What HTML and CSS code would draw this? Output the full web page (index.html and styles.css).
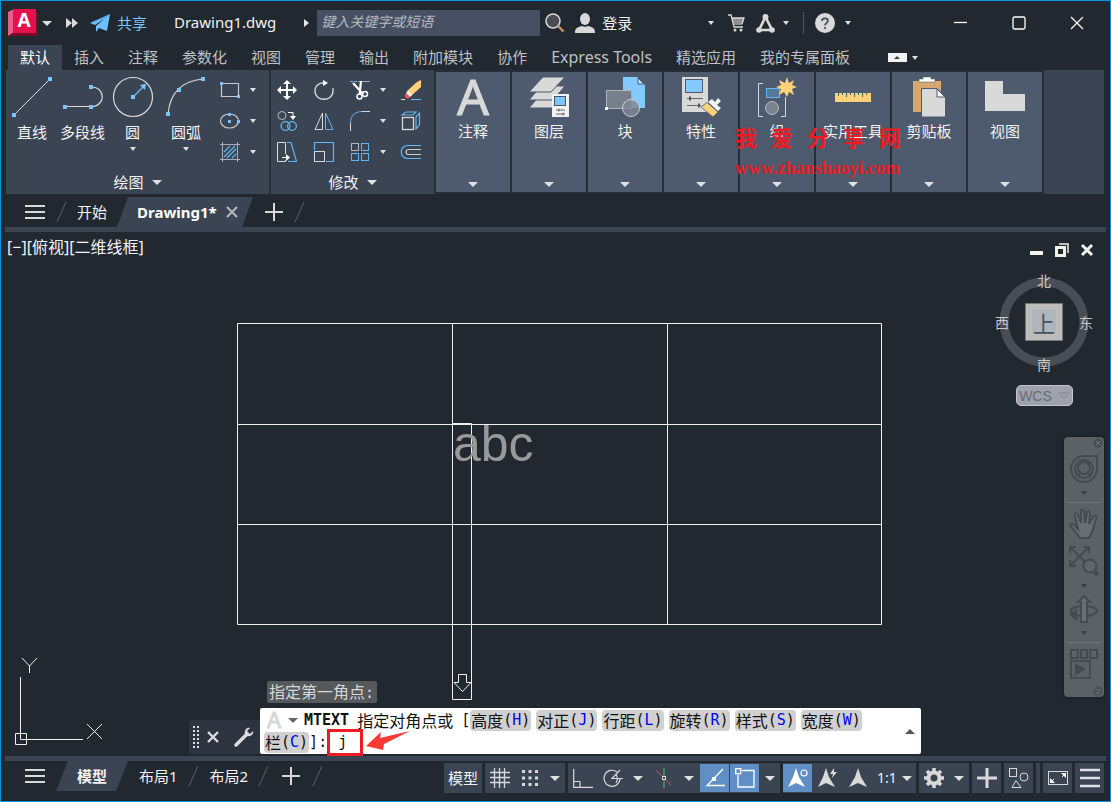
FILE: index.html
```html
<!DOCTYPE html>
<html lang="zh-CN">
<head>
  <meta charset="UTF-8">
  <meta name="viewport" content="width=device-width, initial-scale=1.0">
  <title>Drawing1.dwg</title>
  <link rel="stylesheet" href="styles.css">
</head>
<body>
  <header class="titlebar">
    <button class="app-button" aria-label="A">
      <svg width="30" height="28" viewBox="0 0 30 28">
        <path d="M0 3L6 0V24L0 27Z" fill="#ee5c88"/>
        <path d="M6 0H26L30 5V27H0L6 23Z" fill="#7a0a28"/>
        <rect x="5" y="0" width="23" height="24" fill="#e6104f"/>
        <text x="16" y="18" text-anchor="middle" class="logo-letter">A</text>
      </svg>
      <i class="caret wide"></i>
    </button>
    <button class="more" aria-label="更多">
      <svg width="12" height="10" viewBox="0 0 12 10" fill="#d9d9d9"><path d="M0 0L6 5L0 10ZM6 0L12 5L6 10Z"/></svg>
    </button>
    <button class="share">
      <svg width="20" height="18" viewBox="0 0 20 18"><path d="M20 0L0 9L5 11L15 4L6 12V18L9 14L17 17Z" fill="#6fc0ff"/><path d="M0 9L20 0L7 12L17 3Z" fill="#4e9ddd"/></svg>
      共享
    </button>
    <span class="doc-title">Drawing1.dwg</span>
    <form class="search">
      <svg width="5" height="8" viewBox="0 0 5 8"><path d="M0 0L5 4L0 8Z" fill="#e6e6e6"/></svg>
      <input type="text" placeholder="键入关键字或短语" aria-label="搜索">
      <svg width="20" height="20" viewBox="0 0 20 20" fill="none"><circle cx="8" cy="8" r="7" fill="#484d56" stroke="#d6d6d6" stroke-width="1.6"/><path d="M13 13L18.500 18.500" stroke="#c89a63" stroke-width="2.400"/></svg>
    </form>
    <button class="login">
      <svg width="20" height="20" viewBox="0 0 20 20" fill="#d9d9d9"><ellipse cx="10" cy="6" rx="5" ry="6"/><path d="M0 20C0 15 2 14.500 7 13C9 14 11 14 13 13C18 14.500 20 15 20 20Z"/></svg>
      登录
    </button>
    <div class="title-tools">
      <i class="caret"></i>
      <button aria-label="商店"><svg width="17" height="18" viewBox="0 0 17 18"><path d="M4 4H16L14 11H6Z" fill="#8d9096"/><path d="M0 1H3L6 13H15M4 4H16L14 10" fill="none" stroke="#d9d9d9" stroke-width="1.300"/><circle cx="7" cy="16" r="1.500" fill="#d9d9d9"/><circle cx="13" cy="16" r="1.500" fill="#d9d9d9"/></svg></button>
      <button aria-label="应用"><svg width="19" height="19" viewBox="0 0 19 19" fill="none" stroke="#d9d9d9"><path d="M9.500 3L3 16H16Z" stroke-width="2.600"/><g fill="#d9d9d9" stroke="none"><circle cx="9.500" cy="3" r="3"/><circle cx="3" cy="16" r="2.800"/><circle cx="16" cy="16" r="2.800"/></g></svg><i class="caret"></i></button>
      <button class="help" aria-label="帮助"><svg width="20" height="20" viewBox="0 0 20 20"><circle cx="10" cy="10" r="10" fill="#d9d9d9"/><path d="M7 8C7 4.500 13 4.500 13 8C13 10 10 10 10 12.500M10 14V16" fill="none" stroke="#444b57" stroke-width="1.600"/></svg><i class="caret"></i></button>
    </div>
    <div class="window-tools">
      <button aria-label="最小化"><svg width="14" height="14" viewBox="0 0 14 14"><path d="M0 6.500H13" stroke="#fff" stroke-width="1.300"/></svg></button>
      <button aria-label="最大化"><svg width="14" height="14" viewBox="0 0 14 14"><rect x="1" y="1" width="12" height="12" rx="1.500" fill="none" stroke="#fff" stroke-width="1.300"/></svg></button>
      <button aria-label="关闭"><svg width="14" height="14" viewBox="0 0 14 14"><path d="M1 1L13 13M13 1L1 13" stroke="#fff" stroke-width="1.300"/></svg></button>
    </div>
  </header>

  <nav class="ribbon-tabs">
    <a href="#" class="active">默认</a>
    <a href="#">插入</a>
    <a href="#">注释</a>
    <a href="#">参数化</a>
    <a href="#">视图</a>
    <a href="#">管理</a>
    <a href="#">输出</a>
    <a href="#">附加模块</a>
    <a href="#">协作</a>
    <a href="#" class="latin">Express Tools</a>
    <a href="#">精选应用</a>
    <a href="#">我的专属面板</a>
    <button class="collapse" aria-label="最小化功能区"><svg width="19" height="9" viewBox="0 0 19 9"><rect width="19" height="9" fill="#f2f2f2"/><path d="M6 6H12L9 3Z" fill="#444"/></svg><i class="caret"></i></button>
  </nav>

  <section class="ribbon">
    <div class="panel draw">
      <div class="tools">
        <button class="big">
          <svg width="40" height="40" viewBox="0 0 40 40"><path d="M2 38L38 2" stroke="#d9d9d9"/><path d="M0 36h4v4h-4zM36 0h4v4h-4z" fill="#7cc4ff"/></svg>
          直线
        </button>
        <button class="big">
          <svg width="40" height="40" viewBox="0 0 40 40"><path d="M2 29.500H28C43 29.500 43 10 28 10" fill="none" stroke="#d9d9d9" stroke-width="1.200"/><path d="M0 28h4v4h-4zM26 28h4v4h-4zM26 8h4v4h-4z" fill="#7cc4ff"/></svg>
          多段线
        </button>
        <button class="big">
          <svg width="40" height="40" viewBox="0 0 40 40"><circle cx="20" cy="20" r="19.500" fill="none" stroke="#d9d9d9" stroke-width="1.200"/><path d="M20 20L32 8" stroke="#64b5f3" stroke-width="1.400"/><path d="M18 18h4v4h-4zM27 8L33 7L32 13Z" fill="#7cc4ff"/></svg>
          圆
          <i class="caret"></i>
        </button>
        <button class="big">
          <svg width="40" height="40" viewBox="0 0 40 40"><path d="M2 37C4 16 16 4 37 2" fill="none" stroke="#d9d9d9" stroke-width="1.200"/><path d="M0 35h4v4h-4zM11 11h4v4h-4zM35 0h4v4h-4z" fill="#7cc4ff"/></svg>
          圆弧
          <i class="caret"></i>
        </button>
        <div class="small-tools">
          <button aria-label="矩形"><svg width="20" height="20" viewBox="0 0 20 20"><path d="M1.500 3.500H18.500V16.500H1.500Z" fill="none" stroke="#c7cad0" stroke-width="1.200"/><path d="M0 2h3v3h-3zM17 15h3v3h-3z" fill="#7cc4ff"/></svg><i class="caret"></i></button>
          <button aria-label="椭圆"><svg width="20" height="20" viewBox="0 0 20 20"><ellipse cx="9.500" cy="10" rx="9" ry="7" fill="none" stroke="#c7cad0" stroke-width="1.200"/><path d="M8 2h3v3h-3zM8 9h3v3h-3zM17 9h3v3h-3z" fill="#7cc4ff"/></svg><i class="caret"></i></button>
          <button aria-label="图案填充"><svg width="20" height="20" viewBox="0 0 20 20"><path d="M2.500 0V20M17.500 0V20M0 2.500H20M0 17.500H20" stroke="#a9adb5"/><path d="M4 10L10 4M4 15L15 4M7 16L16 7M12 16L16 12" stroke="#64b5f3" stroke-width="1.300"/></svg><i class="caret"></i></button>
        </div>
      </div>
      <button class="panel-name">绘图<i class="caret wide"></i></button>
    </div>

    <div class="panel modify">
      <div class="modify-grid">
        <button aria-label="移动"><svg width="20" height="20" viewBox="0 0 20 20"><path d="M10 0L14 4H11V9H16V6L20 10L16 14V11H11V16H14L10 20L6 16H9V11H4V14L0 10L4 6V9H9V4H6Z" fill="#fff"/></svg></button>
        <button aria-label="旋转"><svg width="20" height="20" viewBox="0 0 20 20"><path d="M11 3C5 2 1 6 1 11C1 22 19 22 19 11V8" fill="none" stroke="#d9d9d9" stroke-width="1.300"/><path d="M9 0L14 3L9 6Z" fill="#fff"/></svg></button>
        <button aria-label="修剪"><svg width="20" height="20" viewBox="0 0 20 20" fill="none"><path d="M0 1.500H10" stroke="#64b5f3" stroke-dasharray="3 1"/><path d="M12 1.500H20" stroke="#aaa"/><path d="M3 3L13 14M11 1L9.500 15" stroke="#fff" stroke-width="2.200"/><circle cx="9.500" cy="16.500" r="2.500" stroke="#fff" stroke-width="1.500"/><circle cx="15" cy="14" r="2.500" stroke="#fff" stroke-width="1.500"/></svg><i class="caret"></i></button>
        <button aria-label="删除"><svg width="20" height="20" viewBox="0 0 20 20"><path d="M0 19.500H4" stroke="#ddd"/><path d="M10 19.500H20" stroke="#64b5f3"/><path d="M20 0V7L10 16L6 11L16 2Z" fill="#ffd27a"/><path d="M7 11L11 15L9 17L5 13Z" fill="#fff"/><path d="M5 13L9 17C7 20 3 18 4 15Z" fill="#ff5656"/></svg></button>
        <button aria-label="复制"><svg width="20" height="20" viewBox="0 0 20 20" fill="none"><circle cx="5" cy="4.500" r="4" stroke="#b8bcc3"/><path d="M11 1.500H16V6" stroke="#fff"/><path d="M13 5H19L16 9Z" fill="#fff"/><circle cx="8.500" cy="15" r="4.400" stroke="#64b5f3" stroke-width="1.300"/><circle cx="15" cy="15" r="4.400" stroke="#64b5f3" stroke-width="1.300"/></svg></button>
        <button aria-label="镜像"><svg width="20" height="20" viewBox="0 0 20 20" fill="none"><path d="M8.500 2V18.500H1Z" stroke="#d9d9d9"/><path d="M11.500 2V18.500H19Z" stroke="#64b5f3"/></svg></button>
        <button aria-label="圆角"><svg width="20" height="20" viewBox="0 0 20 20" fill="none"><path d="M.5 20V12M12 .5H20" stroke="#d9d9d9"/><path d="M.5 12C.5 5 5 .5 12 .5" stroke="#64b5f3"/></svg><i class="caret"></i></button>
        <button aria-label="分解"><svg width="20" height="20" viewBox="0 0 20 20" fill="none"><rect x="1.500" y="6.500" width="11" height="12" stroke="#d9d9d9" stroke-width="1.300"/><path d="M1 4L5 1H15L12 4ZM15 6L18.500 2V14L15 18Z" stroke="#64b5f3" stroke-width="1.200"/></svg></button>
        <button aria-label="拉伸"><svg width="20" height="20" viewBox="0 0 20 20" fill="none"><path d="M8.500 12V.5H.5V19.500H8.500V18" stroke="#d9d9d9"/><path d="M10 .5H14L19.500 19.500H11" stroke="#64b5f3" stroke-width="1.200"/><path d="M5 15.500H11" stroke="#fff"/><path d="M9 12L13 15.500L9 19Z" fill="#fff"/></svg></button>
        <button aria-label="缩放"><svg width="20" height="20" viewBox="0 0 20 20" fill="none"><path d="M.5 8V.5H19.500V19.500H12" stroke="#64b5f3" stroke-width="1.200"/><rect x=".5" y="9.500" width="10" height="10" stroke="#d9d9d9"/></svg></button>
        <button aria-label="阵列"><svg width="20" height="20" viewBox="0 0 20 20" fill="none" stroke="#64b5f3"><rect x="1.500" y="1.500" width="7" height="7" stroke="#b8b8b8"/><rect x="11.500" y="1.500" width="7" height="7"/><rect x="1.500" y="11.500" width="7" height="7"/><rect x="11.500" y="11.500" width="7" height="7"/></svg><i class="caret"></i></button>
        <button aria-label="偏移"><svg width="20" height="20" viewBox="0 0 20 20" fill="none" stroke-width="1.200"><path d="M20 3.500H7C-2 3.500-2 16.500 7 16.500H20" stroke="#64b5f3"/><path d="M20 7.500H8C4 7.500 4 12.500 8 12.500H20" stroke="#c5c8cd"/></svg></button>
      </div>
      <button class="panel-name">修改<i class="caret wide"></i></button>
    </div>

    <div class="groups">
      <button class="group">
        <svg width="40" height="40" viewBox="0 0 40 40"><text x="20" y="38" text-anchor="middle" class="icon-letter">A</text></svg>
        注释
        <i class="caret wide"></i>
      </button>
      <button class="group">
        <svg width="40" height="40" viewBox="0 0 40 40"><g fill="#d9d9d9" stroke="#4e5a6d" stroke-width="1"><path d="M0 31L12 17H36L24 31Z"/><path d="M0 23L12 9H36L24 23Z"/><path d="M0 15L14 0H36L22 15Z"/></g><rect x="23" y="17" width="17" height="23" fill="#f2f2f2"/><rect x="25.500" y="19.500" width="11" height="9" fill="#7cc4ff" stroke="#4b5565"/><path d="M27 33H36M27 37H36M30 31.500V34.500M34 35.500V38.500" stroke="#666"/></svg>
        图层
        <i class="caret wide"></i>
      </button>
      <button class="group">
        <svg width="40" height="40" viewBox="0 0 40 40"><path d="M18 0H32L40 8V31H18Z" fill="#84c9ff"/><path d="M33 1L39 7H33Z" fill="#c7e6ff" stroke="#4a5a70" stroke-width="1"/><rect x="1.500" y="13.500" width="25" height="18" fill="#777f8d" stroke="#aeb2b9"/><circle cx="26" cy="31" r="8.500" fill="#808897" fill-opacity=".8" stroke="#ccc"/><rect x="0" y="30" width="3" height="3" fill="#fff"/></svg>
        块
        <i class="caret wide"></i>
      </button>
      <button class="group">
        <svg width="40" height="40" viewBox="0 0 40 40"><rect x="1" width="26" height="35" fill="#d9d9d9"/><rect x="4.500" y="2.500" width="17" height="13" fill="#84c9ff" stroke="#4e5a6d"/><path d="M6 21.500H22M6 28.500H20" stroke="#666"/><path d="M8 19.500h2v4h-2zM17 26.500h2v4h-2z" fill="#555"/><path d="M20 30L26 25.500L37 35L32 40Z" fill="#ffd27a" stroke="#4e5a6d" stroke-width=".8"/><path d="M27 25L31 22L34 25L37 21L40 24L36 28L40 31L37 34Z" fill="#f3f3f3"/></svg>
        特性
        <i class="caret wide"></i>
      </button>
      <button class="group">
        <svg width="40" height="40" viewBox="0 0 40 40"><path d="M6 6.500H1.500V39.500H6M24 39.500H28.500V20" fill="none" stroke="#d9d9d9"/><rect x="9.500" y="11.500" width="13" height="9" fill="#55789b" stroke="#64b5f3"/><circle cx="15" cy="31" r="6.500" fill="#7a8290" stroke="#b7bbc1"/><path d="M30 0L32 6L37 3L35 8L40 10L35 12L37 18L32 15L30 20L27 15L22 18L24 12L19 10L24 8L22 3L28 6Z" fill="#ffd27a"/></svg>
        组
        <i class="caret wide"></i>
      </button>
      <button class="group">
        <svg width="40" height="40" viewBox="0 0 40 40"><rect x="2" y="16" width="36" height="9" fill="#ffd27a"/><path d="M5.500 16V19M9.500 16V18M13.500 16V20M17.500 16V18M21.500 16V20M25.500 16V18M29.500 16V20M33.500 16V18" stroke="#4e5a6d"/></svg>
        实用工具
        <i class="caret wide"></i>
      </button>
      <button class="group">
        <svg width="40" height="40" viewBox="0 0 40 40"><rect x="4" y="4" width="28" height="31" fill="#d5a870"/><path d="M10 5V2H14V0H22V2H26V5Z" fill="#fff" stroke="#4e5a6d" stroke-width=".5"/><path d="M12.500 11.500H28L36.500 20V40H12.500Z" fill="#d9d9d9" stroke="#4e5a6d"/><path d="M28 12V20H36Z" fill="#f5f5f5" stroke="#4e5a6d"/></svg>
        剪贴板
        <i class="caret wide"></i>
      </button>
      <button class="group">
        <svg width="40" height="40" viewBox="0 0 40 40"><path d="M0 4H18V17H40V34H0Z" fill="#d9d9d9"/></svg>
        视图
        <i class="caret wide"></i>
      </button>
      <div class="watermark">
        <div class="watermark-name"><span>我</span><span>爱</span><span>分</span><span>享</span><span>网</span></div>
        <div class="watermark-url">www.zhanshaoyi.com</div>
      </div>
    </div>
  </section>

  <nav class="file-tabs">
    <button class="menu" aria-label="菜单"><svg width="20" height="16" viewBox="0 0 20 16"><path d="M0 2H20M0 8H20M0 14H20" stroke="#d9d9d9" stroke-width="2"/></svg></button>
    <svg class="slash" width="10" height="20" viewBox="0 0 10 20"><path d="M0 20L9 0" stroke="#566070"/></svg>
    <a href="#">开始</a>
    <a href="#" class="current">Drawing1*
      <svg width="10" height="10" viewBox="0 0 10 10"><path d="M0 0L10 10M10 0L0 10" stroke="#b5b8be" stroke-width="2"/></svg>
    </a>
    <button class="add" aria-label="新图形"><svg width="18" height="18" viewBox="0 0 18 18"><path d="M9 0V18M0 9H18" stroke="#d9d9d9" stroke-width="2"/></svg></button>
    <svg class="slash" width="10" height="20" viewBox="0 0 10 20"><path d="M0 20L9 0" stroke="#566070"/></svg>
  </nav>

  <main class="canvas">
    <div class="view-label">[−][俯视][二维线框]</div>

    <svg class="drawing" width="648" height="380" viewBox="0 0 648 380" fill="none" stroke="#f0f0f0">
      <path d="M2.500 .5H646.500V301.500H2.500ZM217.500 .5V301.500M432.500 .5V301.500M2.500 101.500H646.500M2.500 201.500H646.500"/>
      <path d="M217.500 100.500H236.500V376.500H217.500Z"/>
      <path d="M223.500 351.500H231.500V359.500H236L227.500 368.500L219 359.500H223.500Z"/>
      <text x="218" y="138" class="sample">abc</text>
    </svg>

    <svg class="ucs" width="90" height="90" viewBox="0 0 90 90" fill="none" stroke="#f0f0f0">
      <path d="M.5 76.500H11.500V87.500H.5ZM5.500 20V82.500H68M7 1L14.500 9L22 1M14.500 9V16M72 67L87 82M87 67L72 82"/>
    </svg>

    <div class="view-tools">
      <button aria-label="最小化"><svg width="14" height="14" viewBox="0 0 14 14"><rect y="8" width="13" height="4" fill="#f2f2ec"/></svg></button>
      <button aria-label="还原"><svg width="14" height="14" viewBox="0 0 14 14" fill="none" stroke="#f2f2ec"><path d="M4 1H13V10" stroke-width="1.500"/><rect x="1.500" y="4.500" width="8" height="8" stroke-width="3"/></svg></button>
      <button aria-label="关闭"><svg width="14" height="14" viewBox="0 0 14 14"><path d="M2 2L12 12M12 2L2 12" stroke="#f2f2ec" stroke-width="3"/></svg></button>
    </div>

    <div class="compass">
      <svg width="90" height="90" viewBox="0 0 90 90"><circle cx="45" cy="45" r="40" fill="none" stroke="#494d55" stroke-width="9"/></svg>
      <span class="north">北</span>
      <span class="west">西</span>
      <span class="east">东</span>
      <span class="south">南</span>
      <button class="cube">上</button>
    </div>
    <button class="wcs">WCS <svg width="12" height="7" viewBox="0 0 12 7"><path d="M1 1H11L6 6Z" fill="none" stroke="#888b98"/></svg></button>

    <div class="navbar">
      <svg class="dot" width="10" height="10" viewBox="0 0 10 10"><circle cx="5" cy="5" r="4.500" fill="#484d52"/><path d="M3 3L7 7M7 3L3 7" stroke="#71777b"/></svg>
      <button aria-label="控制盘"><svg width="28" height="28" viewBox="0 0 28 28"><path d="M14 1H27V14A13 13 0 1 1 14 1Z"/><circle cx="14" cy="14" r="9"/><circle cx="14" cy="13" r="6"/><path d="M10 18L7 21M18 18L21 21"/></svg><i class="caret"></i></button>
      <hr>
      <button aria-label="平移"><svg width="30" height="30" viewBox="0 0 30 30"><path d="M11 29C8 25 6 22 2 18C0 15 3 14 5 16L9 20L6 7C5 4 8 3 9 6L12 14V3C12 0 15 0 15 3L16 14L18 4C19 1 21 2 21 5L20 15L24 8C26 5 28 7 27 10L23 23L20 29Z" fill="#686e73"/></svg></button>
      <button aria-label="缩放"><svg width="30" height="30" viewBox="0 0 30 30"><path d="M1 7V1H7M1 1L20 20M14 1H20V7M20 1L1 20M1 14V20H7" stroke-width="2"/><circle cx="21" cy="20" r="6.500" fill="#60666b"/><path d="M25 25L29 29" stroke-width="4"/></svg><i class="caret"></i></button>
      <button aria-label="动态观察"><svg width="28" height="28" viewBox="0 0 28 28"><ellipse cx="14" cy="16" rx="13" ry="5"/><path d="M11 27V7H8L14 1L20 7H17V27Z" fill="#686e73"/><path d="M6 16V24L1 20Z" fill="#454b50"/></svg><i class="caret"></i></button>
      <hr>
      <button aria-label="运动显示"><svg width="28" height="30" viewBox="0 0 28 30"><path d="M1 1H8V9H1ZM11 1H17V9H11ZM20 1H27V9H20ZM1 12H20V29H1Z"/><path d="M6 16L14 20L6 25Z" fill="#454b50"/></svg></button>
      <svg class="dot" width="10" height="10" viewBox="0 0 10 10"><circle cx="5" cy="5" r="4.500" fill="#484d52"/><path d="M2 4H8M3 6L5 8L7 6" fill="none" stroke="#71777b"/></svg>
    </div>

    <div class="command">
      <div class="history">指定第一角点<span class="mono">:</span></div>
      <div class="command-bar">
        <div class="command-tools">
          <svg width="6" height="22" viewBox="0 0 6 22"><path d="M1 0V22M5 0V22" stroke="#e0e0e0" stroke-width="2" stroke-dasharray="2 2"/></svg>
          <button aria-label="关闭"><svg width="12" height="12" viewBox="0 0 12 12"><path d="M1 1L11 11M11 1L1 11" stroke="#dcdcdc" stroke-width="2.400"/></svg></button>
          <button class="customize" aria-label="自定义"><svg width="20" height="20" viewBox="0 0 20 20"><path d="M2 18L12 8" stroke="#dcdcdc" stroke-width="3.500" stroke-linecap="round"/><path d="M16 1L13 4L16 7L19 4C20 7 17 10 13 9L11 7C10 3 13 0 16 1Z" fill="#dcdcdc"/></svg></button>
        </div>
        <div class="prompt">
          <div class="line first">
            <svg width="17" height="18" viewBox="0 0 17 18"><text x="8" y="17" text-anchor="middle" class="prompt-letter">A</text></svg>
            <i class="caret wide"></i>
            <b class="mono">MTEXT</b>
            <span class="ask">指定对角点或</span>
            <span class="mono">[</span>
            <button class="option">高度<span class="mono">(<em>H</em>)</span></button>
            <button class="option">对正<span class="mono">(<em>J</em>)</span></button>
            <button class="option">行距<span class="mono">(<em>L</em>)</span></button>
            <button class="option">旋转<span class="mono">(<em>R</em>)</span></button>
            <button class="option">样式<span class="mono">(<em>S</em>)</span></button>
            <button class="option">宽度<span class="mono">(<em>W</em>)</span></button>
          </div>
          <div class="line">
            <button class="option">栏<span class="mono">(<em>C</em>)</span></button>
            <label class="mono" for="command-input">]:</label>
            <input class="mono" id="command-input" type="text" value="j">
          </div>
          <button class="expand" aria-label="展开"><svg width="10" height="5" viewBox="0 0 10 5"><path d="M0 5L5 0L10 5Z" fill="#555"/></svg></button>
          <svg class="arrow" width="44" height="20" viewBox="0 0 44 20"><path d="M0 15L15 1L14 7L44 0L18 13L17 19Z" fill="#ff3a34"/></svg>
        </div>
      </div>
    </div>
  </main>

  <footer class="statusbar">
    <nav class="layouts">
      <button class="menu" aria-label="菜单"><svg width="20" height="16" viewBox="0 0 20 16"><path d="M0 2H20M0 8H20M0 14H20" stroke="#d9d9d9" stroke-width="2"/></svg></button>
      <a href="#" class="current">模型</a>
      <a href="#">布局1</a>
      <svg class="slash" width="10" height="20" viewBox="0 0 10 20"><path d="M0 20L9 0" stroke="#566070"/></svg>
      <a href="#">布局2</a>
      <svg class="slash" width="10" height="20" viewBox="0 0 10 20"><path d="M0 20L9 0" stroke="#566070"/></svg>
      <button class="add" aria-label="新布局"><svg width="18" height="18" viewBox="0 0 18 18"><path d="M9 0V18M0 9H18" stroke="#d9d9d9" stroke-width="2"/></svg></button>
      <svg class="slash" width="10" height="20" viewBox="0 0 10 20"><path d="M0 20L9 0" stroke="#566070"/></svg>
    </nav>
    <div class="status-tools">
      <div class="cell"><button class="model">模型</button></div>
      <div class="cell">
        <button aria-label="栅格"><svg width="20" height="20" viewBox="0 0 20 20"><path d="M4.500 0V20M9.500 0V20M14.500 0V20M0 4.500H20M0 9.500H20M0 14.500H20" stroke="#d9d9d9" stroke-width="1.300"/></svg></button>
        <button aria-label="捕捉"><svg width="16" height="16" viewBox="0 0 16 16"><path d="M0 1.500H16M0 8H16M0 14.500H16" stroke="#d9d9d9" stroke-width="3" stroke-dasharray="3 3.500"/></svg></button>
        <button class="drop" aria-label="捕捉设置"><i class="caret wide"></i></button>
      </div>
      <div class="cell">
        <button aria-label="正交"><svg width="20" height="20" viewBox="0 0 20 20"><path d="M.7 1V19.300H20M1 13.500H7V19" fill="none" stroke="#d9d9d9" stroke-width="1.200"/></svg></button>
        <button aria-label="极轴"><svg width="20" height="20" viewBox="0 0 20 20" fill="none" stroke="#d9d9d9" stroke-width="1.200"><path d="M14 4A8 8 0 1 0 17 11"/><path d="M20 10.500H9L17 2M13 6C14 8 15 12 13 15"/></svg></button>
        <button class="drop" aria-label="极轴设置"><i class="caret wide"></i></button>
        <button aria-label="等轴测"><svg width="20" height="20" viewBox="0 0 20 20"><path d="M10 0V20" stroke="#4fa76a" stroke-width="1.300"/><path d="M2 2L17 17" stroke="#c9595f"/><rect x="8.500" y="8.500" width="3" height="3" fill="#3b4453" stroke="#ddd"/></svg></button>
        <button class="drop" aria-label="等轴测设置"><i class="caret wide"></i></button>
        <button class="on" aria-label="对象捕捉追踪"><svg width="20" height="20" viewBox="0 0 20 20"><path d="M18 1L2 17.500H20" fill="none" stroke="#fff" stroke-width="1.300"/><rect x="7" y="9" width="4" height="4" fill="#fff"/></svg></button>
        <button class="on" aria-label="对象捕捉"><svg width="20" height="20" viewBox="0 0 20 20" fill="none" stroke="#fff" stroke-width="1.300"><path d="M7 2.500H19V19H3V7"/><rect x=".7" y=".7" width="5" height="5"/></svg></button>
        <button class="drop" aria-label="捕捉选项"><i class="caret wide"></i></button>
      </div>
      <div class="cell">
        <button class="on" aria-label="注释可见性"><svg width="20" height="20" viewBox="0 0 20 20"><path d="M8 0L11 9L17 19L8 15L0 19L5 9Z" fill="#fff"/><circle cx="16" cy="5" r="3" fill="none" stroke="#fff" stroke-width="1.200"/></svg></button>
        <button aria-label="自动缩放"><svg width="20" height="20" viewBox="0 0 20 20" fill="#d9d9d9"><path d="M8 0L11 9L17 19L8 15L0 19L5 9ZM16 0L12 6H15L14 10L19 4H16Z"/></svg></button>
        <button aria-label="注释"><svg width="20" height="20" viewBox="0 0 20 20" fill="#d9d9d9"><path d="M10 0L13 9L19 19L10 15L1 19L7 9Z"/></svg></button>
        <button class="scale">1:1<i class="caret wide"></i></button>
      </div>
      <div class="cell">
        <button aria-label="工作空间"><svg width="20" height="20" viewBox="0 0 20 20" fill="none" stroke="#d9d9d9"><circle cx="10" cy="10" r="5.500" stroke-width="4"/><path d="M10 0V4M10 16V20M0 10H4M16 10H20M3 3L6 6M14 14L17 17M17 3L14 6M6 14L3 17" stroke-width="3.500"/></svg></button>
        <button class="drop" aria-label="工作空间列表"><i class="caret wide"></i></button>
      </div>
      <div class="cell"><button aria-label="监视器"><svg width="20" height="20" viewBox="0 0 20 20"><path d="M10 0V20M0 10H20" stroke="#d9d9d9" stroke-width="3"/></svg></button></div>
      <div class="cell"><button aria-label="隔离"><svg width="20" height="20" viewBox="0 0 20 20" fill="none" stroke="#d9d9d9"><rect x=".5" y=".5" width="7" height="8"/><circle cx="15" cy="9" r="4"/><path d="M7 12.500L12 19.500H3Z"/></svg></button></div>
      <div class="cell sliver"></div>
      <div class="cell"><button aria-label="全屏"><svg width="20" height="20" viewBox="0 0 20 20"><rect x=".5" y="3.500" width="19" height="13" fill="none" stroke="#d9d9d9"/><path d="M13 5H18V10ZM2 10V15H7Z" fill="#fff"/><path d="M3 14L6 11M14 9L17 6" stroke="#fff"/></svg></button></div>
      <div class="cell"><button aria-label="自定义"><svg width="20" height="20" viewBox="0 0 20 20"><path d="M0 2H20M0 10H20M0 18H20" stroke="#e0e0e0" stroke-width="2.500"/></svg></button></div>
    </div>
  </footer>
</body>
</html>
```

FILE: styles.css
```css
* {
  box-sizing: border-box;
}

body {
  margin: 0;
  height: 100vh;
  display: flex;
  flex-direction: column;
  overflow: hidden;
  border: 1px solid #0a93dd;
  background-color: #212830;
  color: #f2f2f2;
  font-family: "Noto Sans", "Noto Sans CJK SC", sans-serif;
  font-size: 15px;
  line-height: 20px;
}

button {
  display: flex;
  align-items: center;
  justify-content: center;
  margin: 0;
  padding: 0;
  border: none;
  background: none;
  color: inherit;
  font: inherit;
  white-space: nowrap;
}

a {
  color: inherit;
  text-decoration: none;
  white-space: nowrap;
}

svg {
  display: block;
  flex: none;
  overflow: visible;
}

.caret {
  flex: none;
  width: 0;
  height: 0;
  border: 3px solid transparent;
  border-top: 4px solid #e0e0e0;
  border-bottom: none;
}

.caret.wide {
  border-width: 5px 5px 0;
}

/* title bar */

.titlebar {
  flex: none;
  display: flex;
  align-items: center;
  height: 44px;
  padding: 0 26px 0 7px;
}

.app-button {
  gap: 4px;
}

.more {
  margin-left: 14px;
}

.share {
  margin-left: 12px;
  gap: 7px;
  color: #7cc4ff;
}

.doc-title {
  margin-left: 27px;
  padding-bottom: 3px;
}

.search {
  display: flex;
  align-items: center;
  margin-left: 28px;
}

.search input {
  width: 223px;
  height: 26px;
  margin: 0 5px 0 8px;
  padding: 0 4px 3px;
  border: none;
  background-color: #474f62;
  color: #ddd;
  font: italic 14px/20px "Noto Sans", "Noto Sans CJK SC", sans-serif;
}

.search input::placeholder {
  color: #b4b8c2;
}

.login {
  margin-left: 10px;
  gap: 7px;
}

.title-tools {
  display: flex;
  align-items: center;
  gap: 11px;
  margin-left: auto;
}

.title-tools .caret {
  margin-right: 3px;
}

.title-tools button {
  gap: 8px;
}

.title-tools .help {
  height: 22px;
  gap: 10px;
  padding-left: 11px;
  border-left: 1px solid #4b566a;
}

.window-tools {
  display: flex;
  gap: 44px;
  margin-left: 100px;
}

/* ribbon tabs */

.ribbon-tabs {
  flex: none;
  display: flex;
  height: 25px;
  padding-left: 7px;
  color: #bfc1c5;
}

.ribbon-tabs a {
  padding: 2px 12px;
}

.ribbon-tabs .active {
  background-color: #3b4453;
  color: #fff;
}

.ribbon-tabs .latin {
  font-size: 16px;
}

.collapse {
  gap: 5px;
  margin-left: 26px;
}

/* ribbon */

.ribbon {
  flex: none;
  display: flex;
  height: 124px;
  margin: 0 6px 3px 5px;
  background-color: #3b4453;
}

.panel {
  display: flex;
  flex-direction: column;
  justify-content: space-between;
  border-right: 2px solid #262d38;
  padding: 7px 0 2px;
}

.draw {
  width: 265px;
}

.tools {
  display: grid;
  grid-template-columns: 52px 49px 51px 56px 50px;
}

.big {
  flex-direction: column;
  justify-content: flex-start;
  gap: 5px;
}

.small-tools {
  display: grid;
  row-gap: 11px;
  align-content: start;
  padding-top: 3px;
}

.small-tools button {
  justify-content: flex-start;
  gap: 10px;
  padding-left: 6px;
}

.panel-name {
  gap: 8px;
}

.modify {
  width: 165px;
}

.modify-grid {
  display: grid;
  grid-template-columns: 37px 36px 51px 20px;
  row-gap: 11px;
  padding: 3px 0 0 6px;
}

.modify-grid button {
  justify-content: flex-start;
  gap: 10px;
}

.groups {
  position: relative;
  display: flex;
  gap: 2px;
  padding: 2px 2px 2px 0;
  background-color: #262d38;
  height: 124px;
}

.group {
  flex-direction: column;
  gap: 4px;
  width: 74px;
  padding: 5px 0;
  background-color: #4e5a6d;
}

.group .caret {
  margin-top: auto;
}

.icon-letter {
  font: 50px "Noto Sans", sans-serif;
  fill: #d9d9d9;
  stroke: #d9d9d9;
}

.logo-letter {
  font: bold 19px "Noto Sans", sans-serif;
  fill: #fff;
}

.watermark {
  position: absolute;
  left: 299px;
  top: 52px;
  color: #ed1c24;
}

.watermark-name {
  display: flex;
  gap: 14px;
  font: bold 22px/28px "Noto Sans CJK SC", sans-serif;
}

.watermark-url {
  font: bold 18px/36px "Liberation Serif", serif;
}

/* file and layout tabs */

.file-tabs {
  flex: none;
  display: flex;
  align-items: center;
  height: 35px;
  margin: 0 4px;
  padding-left: 20px;
  border-bottom: 5px solid #3b4453;
}

.file-tabs .menu {
  margin-right: 12px;
}

.file-tabs a {
  padding: 5px 10px;
}

.file-tabs .current {
  display: flex;
  align-items: center;
  gap: 10px;
  width: 136px;
  padding-left: 20px;
  background-color: #3b4453;
  color: #fff;
  font-weight: bold;
  clip-path: polygon(11px 0, 100% 0, 125px 100%, 0 100%);
}

.add {
  margin: 0 12px;
}

/* drawing area */

.canvas {
  position: relative;
  flex: 1;
  min-height: 0;
}

.view-label {
  padding: 5px 6px;
  font-size: 16px;
}

.drawing {
  position: absolute;
  left: 234px;
  top: 91px;
}

.sample {
  font: 50px "Liberation Sans", sans-serif;
  fill: #999;
  stroke: none;
}

.ucs {
  position: absolute;
  left: 14px;
  bottom: 9px;
}

.view-tools {
  position: absolute;
  top: 11px;
  right: 16px;
  display: flex;
  gap: 11px;
}

.compass {
  position: absolute;
  top: 45px;
  right: 21px;
  width: 90px;
  height: 90px;
  font: 14px/14px "Noto Sans CJK SC", sans-serif;
  color: #c8c8c8;
}

.compass span,
.cube {
  position: absolute;
}

.north,
.south {
  left: 38px;
}

.north {
  top: -4px;
}

.south {
  bottom: -4px;
}

.west,
.east {
  top: 38px;
}

.west {
  left: -4px;
}

.east {
  right: -4px;
}

.cube {
  left: 26px;
  top: 26px;
  width: 38px;
  height: 38px;
  border: 1px solid #777;
  background-color: #b0b5bb;
  box-shadow: inset 0 0 0 6px #bcbcba;
  color: #4b5263;
  font: 22px/24px "Noto Sans CJK SC", sans-serif;
}

.wcs {
  position: absolute;
  top: 153px;
  right: 37px;
  gap: 6px;
  width: 57px;
  height: 21px;
  border: 1px solid #c3c4cc;
  border-radius: 5px;
  background-color: #9fa1ad;
  color: #686b78;
  font: 14px/18px "Liberation Sans", sans-serif;
}

.navbar {
  position: absolute;
  top: 205px;
  right: 6px;
  display: flex;
  flex-direction: column;
  align-items: center;
  justify-content: space-between;
  width: 40px;
  height: 260px;
  padding: 1px;
  border-radius: 4px;
  background-color: #5b6165;
  box-shadow: 0 0 3px #14181d;
}

.navbar button {
  flex-direction: column;
  gap: 8px;
}

.navbar button svg {
  fill: none;
  stroke: #454b50;
  stroke-width: 2;
}

.navbar .caret {
  border-top-color: #3b4045;
}

.navbar hr {
  width: 34px;
  margin: 0;
  border: none;
  border-top: 1px solid #6c7276;
}

.dot {
  align-self: flex-end;
}

/* command line */

.command {
  position: absolute;
  left: 188px;
  bottom: 2px;
}

.mono {
  font-family: "DejaVu Sans Mono", monospace;
  font-size: 15px;
}

.history {
  width: 110px;
  margin: 0 0 5px 78px;
  padding: 0 2px;
  border-radius: 2px;
  background-color: #55595c;
  color: #d8d8d8;
  font: 16px/20px "Noto Sans CJK SC", sans-serif;
  white-space: nowrap;
}

.command-bar {
  display: flex;
  align-items: flex-end;
}

.command-tools {
  display: flex;
  align-items: center;
  gap: 8px;
  width: 71px;
  height: 34px;
  padding: 0 6px 0 4px;
  border-radius: 4px 0 0 4px;
  background-color: #2d3440;
}

.customize {
  margin-left: auto;
}

.prompt {
  position: relative;
  width: 661px;
  padding: 1px 4px;
  border-radius: 2px;
  background-color: #fff;
  color: #111;
  font: 16px/20px "Noto Sans CJK SC", sans-serif;
}

.prompt-letter {
  font: 22px "Noto Sans", sans-serif;
  fill: #d8d8d8;
  stroke: #d8d8d8;
}

.line {
  display: flex;
  align-items: center;
  height: 22px;
}

.line .caret {
  margin: 0 6px 0 5px;
  border-top-color: #666;
}

.line.first {
  padding-left: 2px;
}

.ask {
  margin: 0 8px;
}

.option {
  height: 21px;
  margin-right: 5px;
  padding: 0 1px;
  border-radius: 4px;
  background-color: #d0d0d0;
}

.line label {
  margin-left: -5px;
}

.option em {
  color: #0000f0;
  font-style: normal;
}

#command-input {
  width: 36px;
  height: 27px;
  padding: 0 8px;
  border: 3px solid #ed1c24;
  background-color: #fff;
  color: #111;
}

.expand {
  position: absolute;
  right: 6px;
  top: 21px;
}

.arrow {
  position: absolute;
  left: 106px;
  top: 23px;
}

/* status bar */

.statusbar {
  flex: none;
  display: flex;
  align-items: flex-start;
  justify-content: space-between;
  height: 45px;
  margin: 0 4px;
  padding-right: 2px;
  border-top: 5px solid #3b4453;
}

.layouts {
  display: flex;
  align-items: center;
  gap: 1px;
  height: 30px;
  padding-left: 20px;
}

.layouts a {
  padding: 5px 10px;
}

.layouts .current {
  width: 72px;
  margin-left: 10px;
  padding-left: 21px;
  background-color: #3b4453;
  font-weight: bold;
  clip-path: polygon(12px 0, 100% 0, 60px 100%, 0 100%);
}

.status-tools {
  display: flex;
  gap: 3px;
  padding-top: 2px;
}

.cell {
  display: flex;
  align-items: center;
  gap: 1px;
  height: 30px;
  background-color: #3b4453;
}

.cell button {
  width: 29px;
  height: 28px;
}

.cell .model {
  width: 38px;
}

.cell .drop {
  width: 20px;
}

.cell .scale {
  gap: 5px;
  width: 43px;
  font-size: 14px;
}

.cell .on {
  background-color: #5f8fc4;
}

.sliver {
  width: 4px;
}
```
